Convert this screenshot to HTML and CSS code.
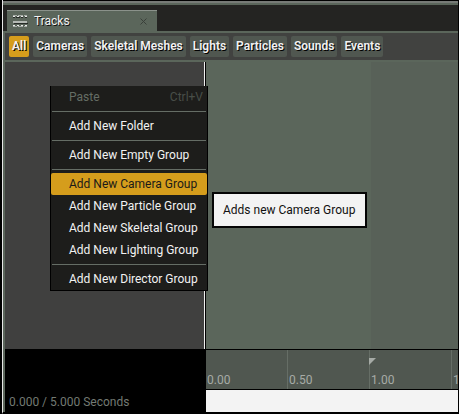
FILE: index.html
```html
<!DOCTYPE html>
<html lang="en">
<head>
<meta charset="utf-8">
<title>Tracks</title>
<link rel="stylesheet" href="styles.css">
</head>
<body>
<div class="window">
  <header class="tab-bar">
    <div class="tab">
      <svg class="tab-icon" width="16" height="14" viewBox="0 0 16 14" aria-hidden="true">
        <path d="M1 1.500h4M6 1.500h5M12 1.500h3" stroke="#a9aea9"/>
        <path d="M1 2.500h2M5 2.500h2M9 2.500h2M13 2.500h2" stroke="#e8e8e8"/>
        <path d="M1 3.500h2M4 3.500h4M9 3.500h2M13 3.500h2" stroke="#262a26"/>
        <path d="M1 8h14" stroke="#b4b9b4" stroke-width="2"/>
        <path d="M2 9.500h14" stroke="#262a26"/>
        <path d="M1 11.500h2M5 11.500h2M9 11.500h2M13 11.500h2" stroke="#e8e8e8"/>
        <path d="M1 12.500h4M6 12.500h5M12 12.500h3" stroke="#a9aea9"/>
      </svg>
      <span class="tab-title">Tracks</span>
      <button class="tab-close" aria-label="Close tab">
        <svg width="7" height="7" viewBox="0 0 7 7"><path d="M.5.5l6 6M6.500.5l-6 6" stroke="#3a403a"/></svg>
      </button>
    </div>
  </header>
  <nav class="filters">
    <button class="filter active">All</button>
    <button class="filter">Cameras</button>
    <button class="filter">Skeletal Meshes</button>
    <button class="filter">Lights</button>
    <button class="filter">Particles</button>
    <button class="filter">Sounds</button>
    <button class="filter">Events</button>
  </nav>
  <main class="editor">
    <section class="track-list"></section>
    <section class="timeline"><div class="past-range"></div></section>
    <div class="status">0.000 / 5.000 Seconds</div>
    <div class="ruler-area">
      <div class="ruler">
        <span class="tick">0.00</span>
        <span class="tick">0.50</span>
        <span class="tick">1.00
          <svg class="marker" width="7" height="7" viewBox="0 0 7 7" aria-hidden="true"><path d="M0 0h7L0 7z" fill="#a6aba6"/></svg>
        </span>
        <span class="tick">1.50</span>
      </div>
      <div class="scroll-track"></div>
    </div>
  </main>
</div>
<div class="menu" role="menu">
  <button class="item" role="menuitem" disabled>Paste<span class="shortcut">Ctrl+V</span></button>
  <hr>
  <button class="item" role="menuitem">Add New Folder</button>
  <hr>
  <button class="item" role="menuitem">Add New Empty Group</button>
  <hr>
  <button class="item selected" role="menuitem">Add New Camera Group</button>
  <button class="item" role="menuitem">Add New Particle Group</button>
  <button class="item" role="menuitem">Add New Skeletal Group</button>
  <button class="item" role="menuitem">Add New Lighting Group</button>
  <hr>
  <button class="item" role="menuitem">Add New Director Group</button>
</div>
<div class="tooltip" role="tooltip">Adds new Camera Group</div>
</body>
</html>
```
FILE: styles.css
```css
* { box-sizing: border-box; }

body {
  margin: 0;
  background: #000;
  font: 12px/16px Roboto, "Liberation Sans", sans-serif;
  color: #f2f2f2;
}

button {
  margin: 0;
  border: 0;
  font: inherit;
  color: inherit;
}

.window {
  display: flex;
  flex-direction: column;
  height: 100vh;
  margin-left: 2px;
  border-left: 1px solid #e8e8e8;
  border-right: 1px solid #000;
  border-bottom: 2px solid #000;
}

.tab-bar {
  flex: none;
  height: 33px;
  padding: 9px 0 0 4px;
  border-top: 1px solid #000;
  border-bottom: 2px solid #5b665b;
  background: linear-gradient(#777b77 0 2px, #5b665b 2px 4px, #242422 4px);
}

.tab {
  display: flex;
  align-items: center;
  width: 150px;
  height: 21px;
  padding: 0 8px 0 5px;
  border-top: 1px solid #8b928b;
  background: #5b665b;
}

.tab-icon { margin-right: 6px; }
.tab-title { flex: 1; text-shadow: 1px 1px 0 #111; }

.tab-close {
  display: flex;
  padding: 2px;
  background: none;
}

.filters {
  flex: none;
  display: flex;
  align-items: center;
  gap: 4px;
  height: 29px;
  padding: 0 4px;
  border-left: 2px solid #5b665b;
  border-bottom: 2px solid #5b665b;
  background: #414240;
}

.filter {
  height: 21px;
  padding: 0 3px 1px;
  border-radius: 2px;
  background: #505750;
  font-weight: 600;
  white-space: nowrap;
  text-shadow: 1px 1px 0 #000;
}

.active { background: #d59d1c; }

.editor {
  flex: 1;
  display: grid;
  grid-template: 1fr 63px / 201px 1fr;
  border-left: 2px solid #5b665b;
}

.track-list {
  background: #40403f;
  border-right: 1px solid #f0f0f0;
  margin-right: 1px;
}

.timeline {
  display: flex;
  background: #5b665b;
}

.past-range {
  flex: 1;
  margin-left: 165px;
  background: #586158;
}

.status {
  display: flex;
  align-items: flex-end;
  padding: 0 4px 2px;
  background: #000;
  color: #737a73;
}

.ruler-area {
  display: flex;
  flex-direction: column;
  min-width: 0;
}

.ruler {
  display: flex;
  height: 41px;
  border-top: 1px solid #000;
  border-bottom: 1px solid #000;
  background: #505750;
  overflow: hidden;
}

.tick {
  position: relative;
  flex: none;
  width: 82px;
  padding: 22px 0 0 1px;
  border-right: 1px solid #666e66;
  color: #a6aba6;
}

.marker {
  position: absolute;
  top: 8px;
  left: -1px;
}

.scroll-track {
  flex: 1;
  background: #f3f3f3;
}

.menu {
  position: absolute;
  top: 86px;
  left: 50px;
  width: 158px;
  border: 1px solid #000;
  border-top: 0;
  background: #1d1d1b;
}

.item {
  display: flex;
  align-items: center;
  justify-content: space-between;
  width: 100%;
  height: 22px;
  padding: 0 4px 0 18px;
  background: none;
  white-space: nowrap;
}

.item:disabled { color: #656d65; }
.shortcut { color: #484e48; }

.selected {
  border-radius: 2px;
  background: #d59d1c;
  color: #1a1a18;
}

hr {
  height: 1px;
  margin: 3px 1px;
  border: 0;
  background: #656d65;
}

.tooltip {
  position: absolute;
  top: 192px;
  left: 212px;
  padding: 8px 10px 8px 9px;
  border: 2px solid #050505;
  background: #f3f3f3;
  color: #111;
  white-space: nowrap;
}
```
